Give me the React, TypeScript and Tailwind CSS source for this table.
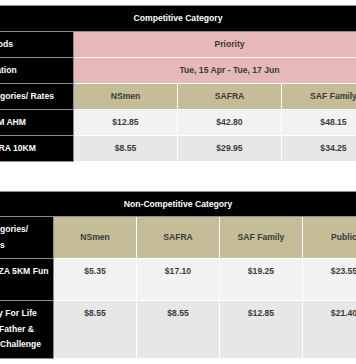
import React from 'react';

const font = { fontFamily: '"Liberation Sans", Arial, sans-serif' };

const dark = 'bg-black text-white text-left pl-[11.4px] pr-[3px] border-r border-b border-[#8c8c8c]';
const head = 'bg-black text-white text-center border-t border-b border-[#8c8c8c]';
const cell = 'text-center text-[#3a3a3a] border-r border-b border-white';

const competitive = [
  { name: '21KM AHM', rates: ['$12.85', '$42.80', '$48.15'], bg: 'bg-[#f2f2f2]' },
  { name: 'SAFRA 10KM', rates: ['$8.55', '$29.95', '$34.25'], bg: 'bg-[#e7e7e7]' },
];

const nonCompetitive = [
  { name: 'PLAZA 5KM Fun Run', rates: ['$5.35', '$17.10', '$19.25', '$23.55'], bg: 'bg-[#f2f2f2]' },
  {
    name: 'Body For Life The Father & Son Challenge',
    rates: ['$8.55', '$8.55', '$12.85', '$21.40'],
    bg: 'bg-[#e7e7e7]',
  },
];

const App: React.FC = () => {
  return (
    <div className="w-[356px] h-[364px] overflow-hidden bg-white pt-[5px]" style={font}>
      {/* Competitive */}
      <table className="table-fixed w-[416px] ml-[-30px] border-separate border-spacing-0 text-[8.6px] font-bold leading-[15px]">
        <colgroup>
          <col className="w-[104px]" />
          <col className="w-[104px]" />
          <col className="w-[104px]" />
          <col className="w-[104px]" />
        </colgroup>
        <tbody>
          <tr>
            <td colSpan={4} className={`${head} py-[5px]`}>
              Competitive Category
            </td>
          </tr>
          <tr>
            <td className={`${dark} py-[5px]`}>Periods</td>
            <td colSpan={3} className={`${cell} bg-[#e6b8b7] py-[5px]`}>
              Priority
            </td>
          </tr>
          <tr>
            <td className={`${dark} py-[5px]`}>Duration</td>
            <td colSpan={3} className={`${cell} bg-[#e6b8b7] py-[5px]`}>
              Tue, 15 Apr - Tue, 17 Jun
            </td>
          </tr>
          <tr>
            <td className={`${dark} py-[5px]`}>Categories/ Rates</td>
            {['NSmen', 'SAFRA', 'SAF Family'].map((c) => (
              <td key={c} className={`${cell} bg-[#c4bd97] py-[5px]`}>
                {c}
              </td>
            ))}
          </tr>
          {competitive.map((row) => (
            <tr key={row.name}>
              <td className={`${dark} py-[5px]`}>{row.name}</td>
              {row.rates.map((r, i) => (
                <td key={i} className={`${cell} ${row.bg} py-[5px]`}>
                  {r}
                </td>
              ))}
            </tr>
          ))}
        </tbody>
      </table>

      {/* Non-Competitive */}
      <table className="table-fixed w-[416px] ml-[-30px] mt-[29px] border-separate border-spacing-0 text-[8.6px] font-bold leading-[15.5px]">
        <colgroup>
          <col className="w-[84px]" />
          <col className="w-[83px]" />
          <col className="w-[83px]" />
          <col className="w-[83px]" />
          <col className="w-[83px]" />
        </colgroup>
        <tbody>
          <tr>
            <td colSpan={5} className={`${head} py-[5px] leading-[14px]`}>
              Non-Competitive Category
            </td>
          </tr>
          <tr>
            <td className={`${dark} py-[5px] align-top`}>Categories/ Rates</td>
            {['NSmen', 'SAFRA', 'SAF Family', 'Public'].map((c) => (
              <td key={c} className={`${cell} bg-[#c4bd97] py-[5px] align-middle`}>
                {c}
              </td>
            ))}
          </tr>
          {nonCompetitive.map((row) => (
            <tr key={row.name}>
              <td className={`${dark} py-[5px] align-top`}>{row.name}</td>
              {row.rates.map((r, i) => (
                <td key={i} className={`${cell} ${row.bg} py-[5px] align-top`}>
                  {r}
                </td>
              ))}
            </tr>
          ))}
        </tbody>
      </table>
    </div>
  );
};

export default App;
